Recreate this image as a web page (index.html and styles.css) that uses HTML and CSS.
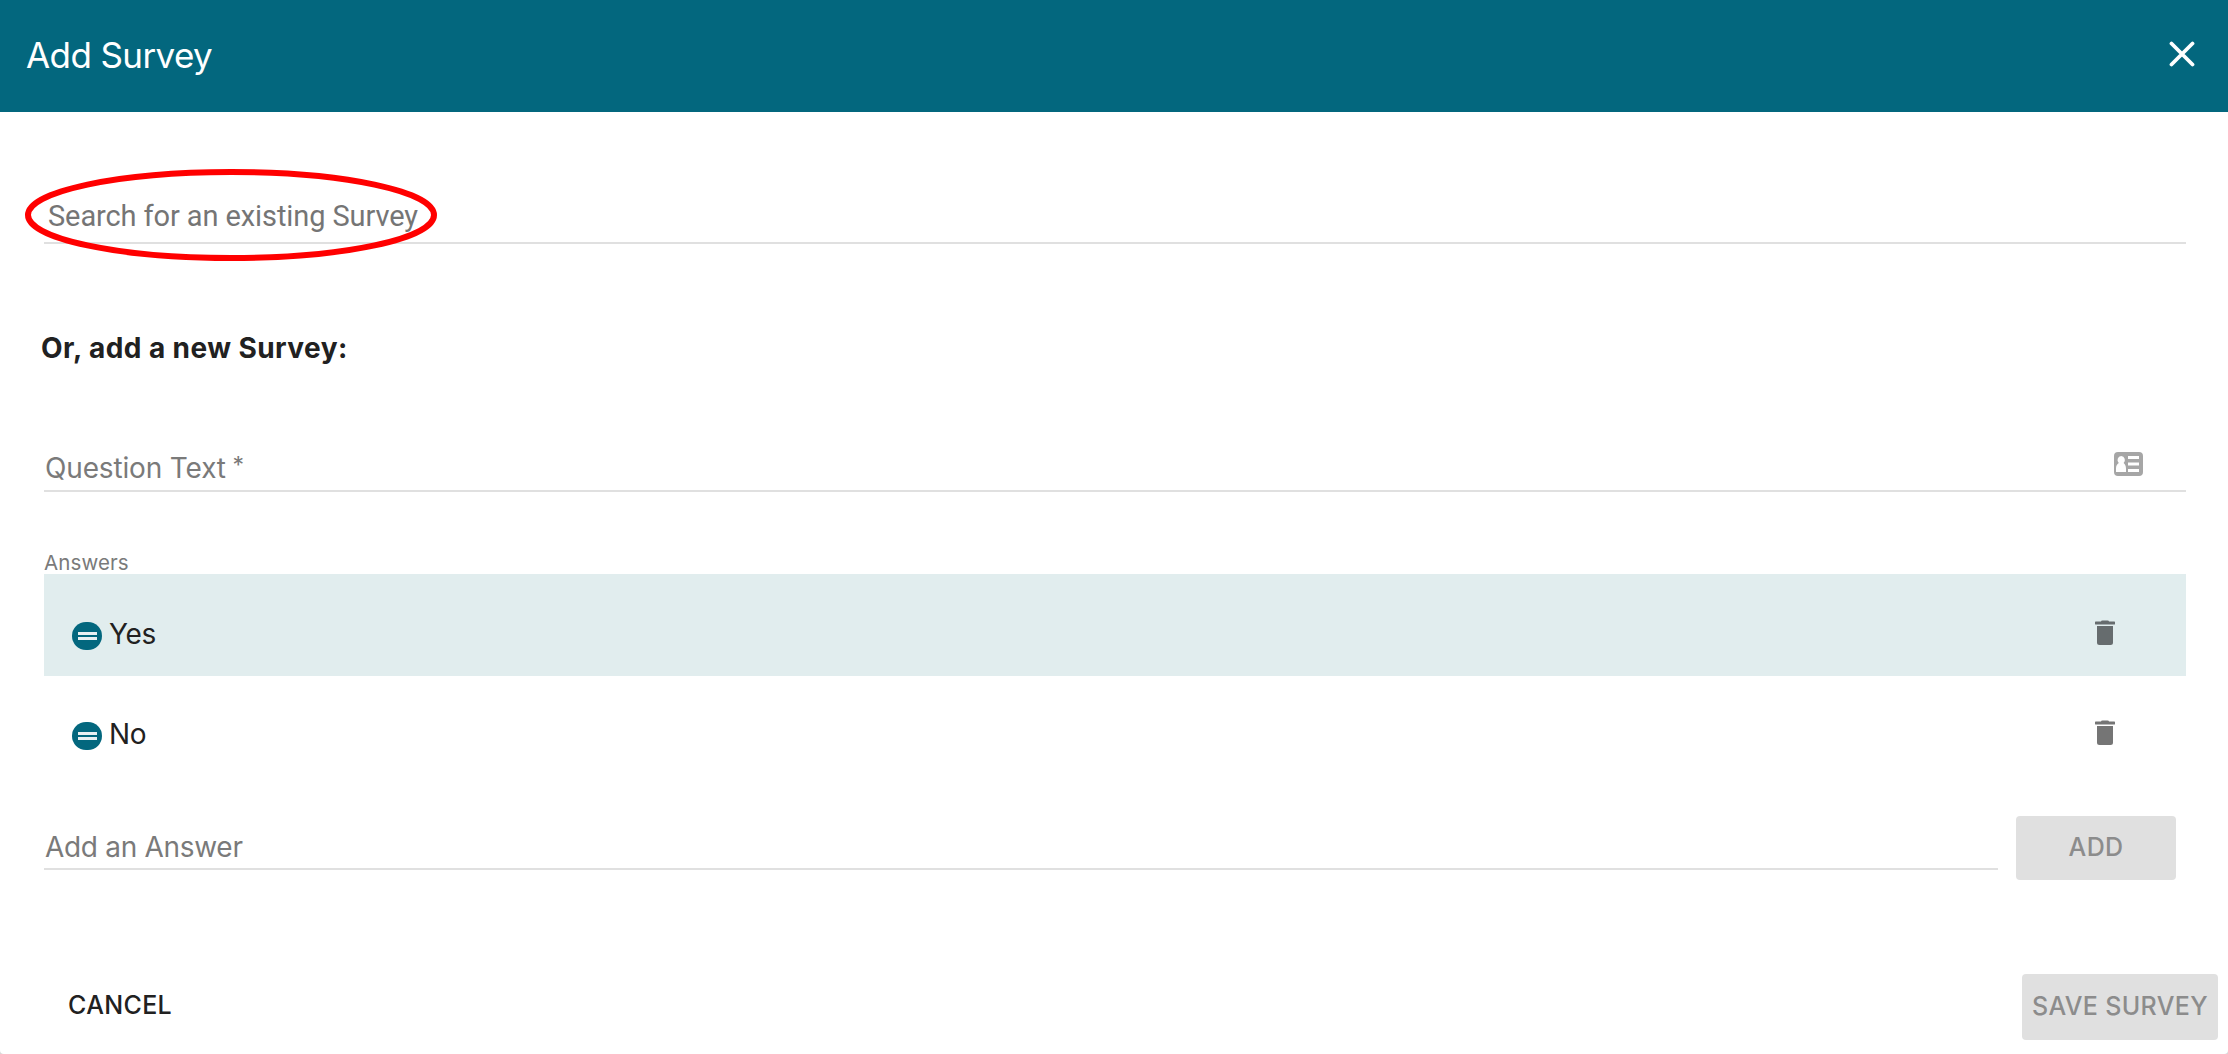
FILE: index.html
```html
<!DOCTYPE html>
<html lang="en">
<head>
  <meta charset="utf-8">
  <title>Add Survey</title>
  <link rel="stylesheet" href="styles.css">
</head>
<body>
  <div class="dialog">
    <header class="dialog-header">
      <h1 class="dialog-title">Add Survey</h1>
      <svg class="close" viewBox="0 0 26 26"><path d="M2.500 2.500l21 21M23.500 2.500l-21 21"/></svg>
    </header>
    <main class="dialog-body">
      <div class="field search">
        <span class="search-label">Search for an existing Survey</span>
        <svg class="highlight" viewBox="0 0 412 92"><ellipse cx="206" cy="46" rx="203" ry="43"/></svg>
      </div>
      <h2 class="subtitle">Or, add a new Survey:</h2>
      <div class="field question">
        <span>Question Text <span class="required">*</span></span>
        <svg class="card-icon" viewBox="0 0 30 26">
          <path fill-rule="evenodd" d="M4 1h21a4 4 0 0 1 4 4v16a4 4 0 0 1-4 4H4a4 4 0 0 1-4-4V5a4 4 0 0 1 4-4zM7.200 5a3.800 4 0 0 0-2.400 7C3 13 2 15 2 17.500V21h10v-3.500C12 15 11 13 9.600 12a3.800 4 0 0 0-2.400-7zM14 5v3h11V5zM14 11.500v3h11v-3zM14 18v3h11v-3z"/>
        </svg>
      </div>
      <div class="answers-label">Answers</div>
      <ul class="answers">
        <li class="answer selected">
          <svg class="handle" viewBox="0 0 30 28"><rect width="30" height="28" rx="14"/><path d="M6 11.500h19M6 16.500h19"/></svg>
          <span class="answer-text">Yes</span>
          <svg class="trash" viewBox="0 0 20 26"><path d="M6 1.500Q6 .5 7.500 .5h5q1.500 0 1.500 1h5a1 1 0 0 1 0 3H1a1 1 0 0 1 0-3zM2 6h16v16.500a2.500 2.500 0 0 1-2.500 2.500h-11A2.500 2.500 0 0 1 2 22.500z"/></svg>
        </li>
        <li class="answer">
          <svg class="handle" viewBox="0 0 30 28"><rect width="30" height="28" rx="14"/><path d="M6 11.500h19M6 16.500h19"/></svg>
          <span class="answer-text">No</span>
          <svg class="trash" viewBox="0 0 20 26"><path d="M6 1.500Q6 .5 7.500 .5h5q1.500 0 1.500 1h5a1 1 0 0 1 0 3H1a1 1 0 0 1 0-3zM2 6h16v16.500a2.500 2.500 0 0 1-2.500 2.500h-11A2.500 2.500 0 0 1 2 22.500z"/></svg>
        </li>
      </ul>
      <div class="add-row">
        <div class="field add-field">Add an Answer</div>
        <button class="btn btn-add" disabled>ADD</button>
      </div>
    </main>
    <footer class="dialog-footer">
      <button class="btn btn-cancel">CANCEL</button>
      <button class="btn btn-save" disabled>SAVE SURVEY</button>
    </footer>
  </div>
</body>
</html>
```
FILE: styles.css
```css
* { box-sizing: border-box; }

body {
  margin: 0;
  background: #d8d8d8;
  font-family: Inter, "Liberation Sans", sans-serif;
  font-size: 28px;
  color: #212121;
}

h1, h2, ul { margin: 0; padding: 0; }
svg { display: block; flex: none; }

.dialog {
  height: 1054px;
  overflow: hidden;
  background: #fff;
  border-radius: 0 0 4px 4px;
}

.dialog-header {
  display: flex;
  align-items: center;
  justify-content: space-between;
  height: 112px;
  padding: 0 33px 0 26px;
  background: #03677e;
  color: #fff;
}
.dialog-title { margin-top: -2px; font-size: 35px; font-weight: 400; line-height: 44px; letter-spacing: -.6px; }
.close { width: 26px; height: 26px; margin-top: -4px; fill: none; stroke: #fff; stroke-width: 3.8; stroke-linecap: round; }

.dialog-body { padding: 0 42px 0 44px; }

.field {
  display: flex;
  align-items: flex-end;
  border-bottom: 2px solid #e0e0e0;
  color: #7a7a7a;
  line-height: 34px;
  letter-spacing: -.3px;
}

.search { position: relative; height: 132px; padding: 0 0 9px 4px; }
.search-label { font-family: Roboto, sans-serif; font-size: 29px; letter-spacing: -.1px; color: #757575; }
.highlight { position: absolute; left: -19px; top: 57px; width: 412px; height: 92px; fill: none; stroke: #f00; stroke-width: 6; }

.subtitle { margin: 87px 0 0 -3px; font-size: 28px; font-weight: 700; line-height: 34px; letter-spacing: .42px; }

.question { height: 127px; justify-content: space-between; padding: 0 42px 3px 1px; letter-spacing: -.15px; }
.required { position: relative; top: -5px; left: -1px; font-size: 23px; }
.card-icon { width: 30px; height: 26px; margin-bottom: 10px; fill: #a6a6a6; }

.answers-label { padding: 59px 0 0; height: 82px; font-size: 20.5px; line-height: 24px; letter-spacing: .1px; color: #7a7a7a; }

.answers { list-style: none; }
.answer { display: flex; align-items: flex-start; height: 100px; padding: 46px 71px 0 28px; }
.selected { height: 102px; padding-top: 48px; background: #e1edee; }
.handle { width: 30px; height: 28px; fill: #03677e; stroke: none; }
.handle path { stroke: #e8f0f2; stroke-width: 2.8; }
.answer-text { flex: 1; margin: -5px 0 0 7px; line-height: 34px; letter-spacing: -.3px; }
.trash { width: 20px; height: 26px; margin-top: -2px; fill: #757575; }
.selected .trash { fill: #666c6e; }

.add-row { display: flex; align-items: flex-start; gap: 18px; height: 198px; padding: 40px 10px 0 0; }
.add-field { flex: 1; height: 54px; padding: 0 0 4px 1px; }

.btn {
  border: 0;
  border-radius: 4px;
  padding: 0;
  background: none;
  font: 500 25px/30px Inter, "Liberation Sans", sans-serif;
  letter-spacing: .35px;
  color: #212121;
}
.btn:disabled { background: #e0e0e0; color: #8c8c8c; }
.btn-add { width: 160px; height: 64px; padding-bottom: 2px; }

.dialog-footer { display: flex; justify-content: space-between; padding: 0 10px 0 68px; }
.btn-cancel { height: 62px; }
.btn-save { width: 196px; height: 66px; padding-bottom: 3px; }
```
